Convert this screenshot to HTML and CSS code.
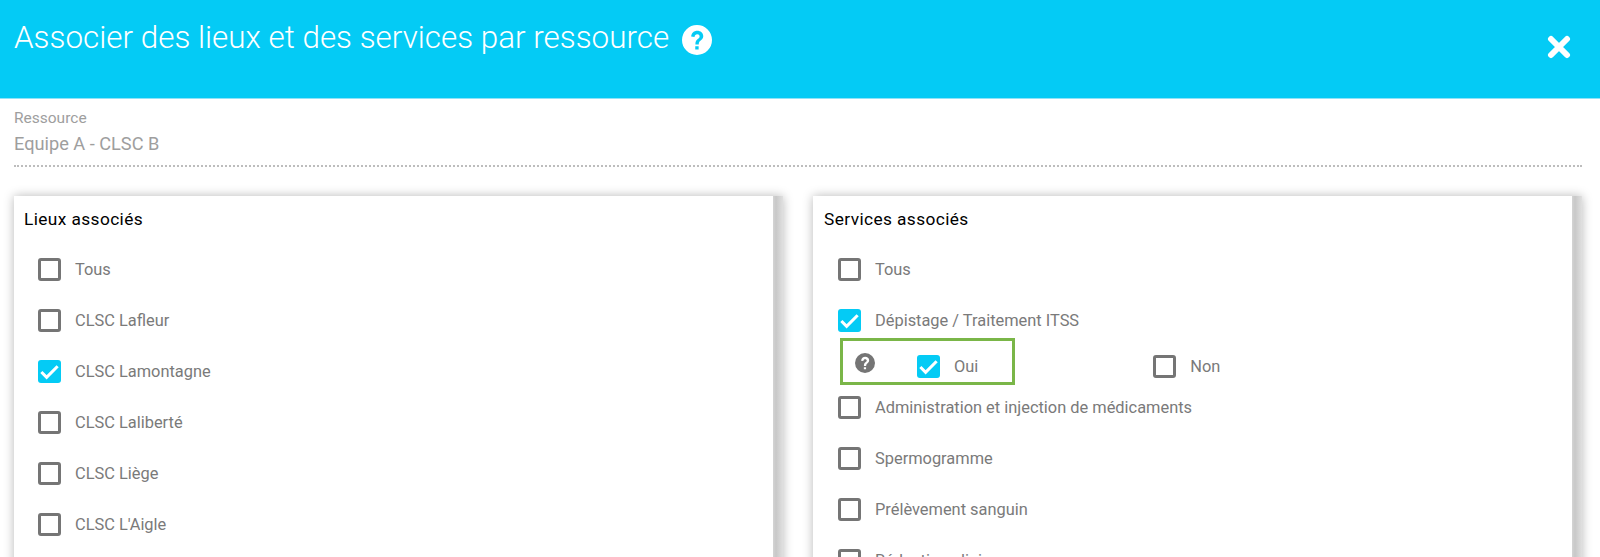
FILE: index.html
```html
<!DOCTYPE html>
<html lang="fr">
<head>
<meta charset="utf-8">
<title>Associer des lieux et des services par ressource</title>
<link rel="stylesheet" href="styles.css">
</head>
<body>
<header class="topbar">
  <div class="title-row">
    <h1 class="title">Associer des lieux et des services par ressource</h1>
    <svg class="title-help" viewBox="0 0 24 24" aria-hidden="true"><path fill="#fff" fill-rule="evenodd" d="M12 0a12 12 0 1 0 0 24 12 12 0 0 0 0-24zm1.300 19.600h-2.700V17h2.700zm2.900-8.400c-.5.700-1.100 1.100-1.700 1.600-.7.600-1 1.100-1.100 2.700h-2.700c0-2.500.7-3.500 1.900-4.400.8-.6 1.500-1.100 1.500-2 0-1-.8-1.700-1.900-1.700-1.200 0-2 .8-2.200 2.100L7.300 9.200C7.700 6.300 9.600 4.600 12.200 4.600c2.700 0 4.800 1.700 4.800 4.300 0 .9-.3 1.700-.8 2.300z"/></svg>
  </div>
  <svg class="close" viewBox="0 0 24 24" aria-hidden="true"><path d="M4 4l16 16M20 4L4 20" stroke="#fff" stroke-width="6" stroke-linecap="round"/></svg>
</header>
<main class="content">
  <div class="field">
    <div class="field-label">Ressource</div>
    <div class="field-value">Equipe A - CLSC B</div>
  </div>
  <div class="panels">
    <section class="panel">
      <div class="panel-body">
        <h2 class="panel-title">Lieux associés</h2>
        <div class="row"><span class="box"></span><span class="label">Tous</span></div>
        <div class="row"><span class="box"></span><span class="label">CLSC Lafleur</span></div>
        <div class="row"><span class="box checked"><svg viewBox="0 0 24 24"><path d="M3.500 12.500l5.500 5.500L20.500 6.500" fill="none" stroke="#fff" stroke-width="3.200"/></svg></span><span class="label">CLSC Lamontagne</span></div>
        <div class="row"><span class="box"></span><span class="label">CLSC Laliberté</span></div>
        <div class="row"><span class="box"></span><span class="label">CLSC Liège</span></div>
        <div class="row"><span class="box"></span><span class="label">CLSC L'Aigle</span></div>
      </div>
      <div class="scrollbar"></div>
    </section>
    <section class="panel panel-services">
      <div class="panel-body">
        <h2 class="panel-title">Services associés</h2>
        <div class="row"><span class="box"></span><span class="label">Tous</span></div>
        <div class="row"><span class="box checked"><svg viewBox="0 0 24 24"><path d="M3.500 12.500l5.500 5.500L20.500 6.500" fill="none" stroke="#fff" stroke-width="3.200"/></svg></span><span class="label">Dépistage / Traitement ITSS</span></div>
        <div class="subrow">
          <div class="highlight"></div>
          <svg class="sub-help" viewBox="0 0 24 24" aria-hidden="true"><path fill="#757575" fill-rule="evenodd" d="M12 0a12 12 0 1 0 0 24 12 12 0 0 0 0-24zm1.300 19.600h-2.700V17h2.700zm2.900-8.400c-.5.700-1.100 1.100-1.700 1.600-.7.600-1 1.100-1.100 2.700h-2.700c0-2.500.7-3.500 1.900-4.400.8-.6 1.500-1.100 1.500-2 0-1-.8-1.700-1.900-1.700-1.200 0-2 .8-2.200 2.100L7.300 9.200C7.700 6.300 9.600 4.600 12.200 4.600c2.700 0 4.800 1.700 4.800 4.300 0 .9-.3 1.700-.8 2.300z"/></svg>
          <div class="choice choice-yes"><span class="box checked"><svg viewBox="0 0 24 24"><path d="M3.500 12.500l5.500 5.500L20.500 6.500" fill="none" stroke="#fff" stroke-width="3.200"/></svg></span><span class="label">Oui</span></div>
          <div class="choice choice-no"><span class="box"></span><span class="label">Non</span></div>
        </div>
        <div class="row"><span class="box"></span><span class="label">Administration et injection de médicaments</span></div>
        <div class="row"><span class="box"></span><span class="label">Spermogramme</span></div>
        <div class="row"><span class="box"></span><span class="label">Prélèvement sanguin</span></div>
        <div class="row"><span class="box"></span><span class="label">Rédaction clinique</span></div>
      </div>
      <div class="scrollbar"></div>
    </section>
  </div>
</main>
</body>
</html>
```
FILE: styles.css
```css
* { box-sizing: border-box; }
html, body { margin: 0; height: 557px; overflow: hidden; background: #fff; }
body { font-family: Roboto, "Liberation Sans", sans-serif; }

.topbar {
  height: 99px;
  background: #04cbf5;
  border-bottom: 1px solid #8fe3f8;
  display: flex;
  justify-content: space-between;
  padding: 15px 29px 0 14px;
}
.title-row { display: flex; align-items: center; gap: 13px; height: 45px; }
.title { margin: 0; font-size: 31.4px; font-weight: 300; color: #fff; line-height: 45px; white-space: nowrap; }
.title-help { width: 30px; height: 30px; margin-top: 5px; }
.close { width: 24px; height: 24px; margin-top: 20px; }

.content { padding: 0 18px 0 14px; }
.field { height: 68px; border-bottom: 2px dotted #bdbdbd; padding-top: 11px; }
.field-label { font-size: 15.5px; line-height: 16px; color: #9e9e9e; }
.field-value { font-size: 18.2px; line-height: 20px; margin-top: 8px; color: #9e9e9e; }

.panels { display: grid; grid-template-columns: 769px 769px; justify-content: space-between; margin-top: 29px; }
.panel { height: 480px; display: flex; background: #fff; box-shadow: 0 0 10px rgba(0,0,0,.28); }
.panel-body { flex: 1; padding: 13px 10px 0 24px; }
.panel-services .panel-body { padding-left: 25px; }
.panel-title { margin: 0 -14px; font-size: 17.3px; font-weight: 400; line-height: 20px; color: #000; letter-spacing: .4px; height: 35px; }
.scrollbar { width: 10px; background: linear-gradient(90deg, #d4d4d4, #c8c8c8 30%, #e0e0e0); }

.row { display: flex; align-items: center; height: 51px; }
.box { flex: none; width: 23px; height: 23px; border: 3px solid #757575; border-radius: 3px; display: block; }
.box.checked { background: #04cbf5; border: 0; }
.box svg { display: block; width: 23px; height: 23px; }
.label { margin-left: 14px; font-size: 16.4px; color: #7a7a7a; white-space: nowrap; }

.subrow { position: relative; height: 36px; display: flex; align-items: center; padding-top: 4px; }
.highlight { position: absolute; left: 2px; top: -8px; width: 175px; height: 47px; border: 3px solid #7ab648; }
.sub-help { width: 20px; height: 20px; margin-left: 17px; margin-top: -6px; }
.choice { display: flex; align-items: center; }
.choice-yes { margin-left: 42px; }
.choice-no { margin-left: 175px; }
```
